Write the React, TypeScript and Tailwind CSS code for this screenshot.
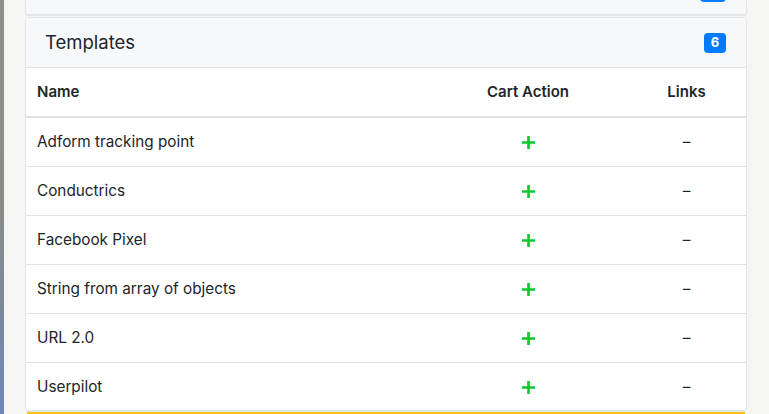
const templates = [
  'Adform tracking point',
  'Conductrics',
  'Facebook Pixel',
  'String from array of objects',
  'URL 2.0',
  'Userpilot',
]

function PlusIcon() {
  return (
    <svg width="15" height="15" viewBox="0 0 15 15" className="block">
      <path d="M7.5 1v13M1 7.5h13" stroke="#08c92b" strokeWidth="2.6" />
    </svg>
  )
}

export default function App() {
  return (
    <div
      className="flex h-[414px] w-[769px] overflow-hidden bg-[#f5f5f3] text-[#212529]"
      style={{ fontFamily: 'Inter, "Noto Sans", sans-serif' }}
    >
      {/* blurred backdrop strip */}
      <div className="w-[4px] shrink-0 bg-gradient-to-b from-[#8d8f8a] via-[#8a8c87] to-[#6d86b8]" />

      <div className="flex flex-1 flex-col pl-[21px] pr-[22px]">
        {/* previous card, mostly scrolled away */}
        <div className="relative h-[16px] shrink-0 rounded-b border-x border-b-2 border-[#e1e4e8] bg-[#f7f8fa]">
          <span className="absolute right-[20px] top-[-18px] h-[20px] w-[26px] rounded bg-[#007bff]" />
        </div>

        {/* Templates card */}
        <div className="mt-[1px] shrink-0 rounded border border-[#e1e4e8] bg-white">
          <div className="flex h-[50px] items-center justify-between border-b border-[#e1e4e8] bg-[#f7f8fa] pl-[19px] pr-[20px]">
            <h2 className="text-[18.5px] leading-none">Templates</h2>
            <span className="flex h-[20px] min-w-[22px] items-center justify-center rounded bg-[#007bff] px-[6px] text-[13px] font-bold text-white">
              6
            </span>
          </div>

          <div className="flex h-[50px] items-center border-b-2 border-[#dee2e6] pt-[1px] text-[15px] font-semibold">
            <div className="flex-1 pl-[11px]">Name</div>
            <div className="w-[198px] text-center">Cart Action</div>
            <div className="w-[119px] text-center">Links</div>
          </div>

          {templates.map((name, i) => (
            <div
              key={name}
              className={`flex items-center text-[15.3px] ${i < templates.length - 1 ? 'h-[49px] border-b border-[#dee2e6]' : 'h-[47px] pt-[2px]'}`}
            >
              <div className="flex-1 pl-[11px]">{name}</div>
              <div className="flex w-[198px] justify-center">
                <PlusIcon />
              </div>
              <div className="w-[119px] text-center">–</div>
            </div>
          ))}
        </div>

        {/* next card edge peeking in */}
        <div className="mx-[2px] h-[4px] shrink-0 border-t border-[#e4e4e4] bg-[#f5c518]" />
      </div>
    </div>
  )
}
